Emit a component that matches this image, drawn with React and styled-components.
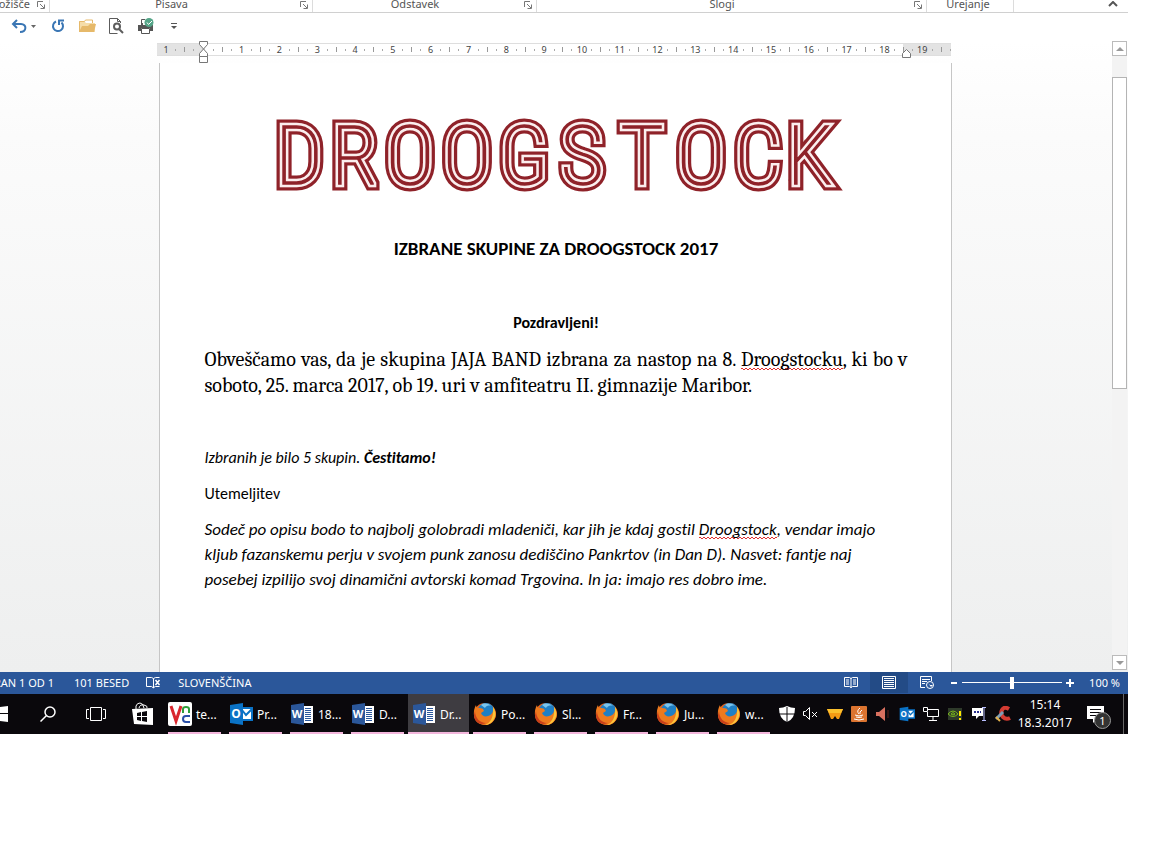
import React, { useState } from 'react';
import styled, { createGlobalStyle } from 'styled-components';

const RIBBON_GROUPS = [
  { label: 'Odložišče', clipped: true },
  { label: 'Pisava' },
  { label: 'Odstavek' },
  { label: 'Slogi' },
  { label: 'Urejanje', noLauncher: true },
];

const LOGO_LETTERS = [
  ['D', 23],
  ['R', 79],
  ['O', 134],
  ['O', 191],
  ['G', 248],
  ['S', 306],
  ['T', 366],
  ['O', 425],
  ['C', 482],
  ['K', 534],
];

const LOGO_LAYERS = [
  { color: '#8f2229', width: 13 },
  { color: '#fbeeee', width: 6.5 },
  { color: '#8f2229', width: 1.5 },
];

const APPS = [
  { icon: 'vnc', label: 'te...' },
  { icon: 'outlook', label: 'Pr...' },
  { icon: 'word', label: '18...' },
  { icon: 'word', label: 'D...' },
  { icon: 'word', label: 'Dr...', active: true },
  { icon: 'firefox', label: 'Po...' },
  { icon: 'firefox', label: 'Sl...' },
  { icon: 'firefox', label: 'Fr...' },
  { icon: 'firefox', label: 'Ju...' },
  { icon: 'firefox', label: 'w...' },
];

const RULER_MARKS = Array.from({ length: 21 }, (_, i) => i - 1);

const Launcher = () => (
  <svg width="8" height="8" viewBox="0 0 8 8" fill="none" stroke="#777">
    <path d="M.5 6V.5H6M3 3l4 4M7.5 3.5v4h-4" />
  </svg>
);

const Logo = () => (
  <LogoSvg viewBox="0 0 560 74" role="img" aria-label="Droogstock">
    {LOGO_LAYERS.map(({ color, width }, i) => (
      <g
        key={i}
        fill={color}
        stroke={color}
        strokeWidth={width}
        strokeLinejoin="miter"
      >
        {LOGO_LETTERS.map(([letter, x], n) => (
          <text key={n} x={x} y="66" textAnchor="middle">
            {letter}
          </text>
        ))}
      </g>
    ))}
  </LogoSvg>
);

const FirefoxIcon = () => (
  <svg width="24" height="24" viewBox="0 0 24 24">
    <circle cx="12" cy="12" r="11" fill="#e8641b" />
    <circle cx="13" cy="9.500" r="8.500" fill="#1f7fc4" />
    <path d="M8 3c3-2 7-2 10 1-3-1-5 0-6 2z" fill="#7cc5ec" />
    <path
      d="M3 3c0 2 1 3 2 3 2 0 4 0 5 1l1 2-3 2c1 3 4 4 7 3 4-1 6-5 5-9 3 4 4 9 1 13-4 6-12 6-17 2C0 16 0 8 3 3z"
      fill="#ee7a1e"
    />
    <path d="M20 5c3 4 3 9 1 12-2 4-6 6-9 6 5-2 9-7 8-18z" fill="#fbc53a" />
    <path d="M2 9c0 7 5 12 11 12-6 3-12-1-12-8z" fill="#c9401a" />
  </svg>
);

const WordIcon = () => (
  <svg width="24" height="24" viewBox="0 0 24 24">
    <path d="M12 4h11v17H12z" fill="#fff" />
    <path d="M15 6.500h6M15 8.500h6M15 10.500h6M15 12.500h6M15 14.500h6M15 16.500h6M15 18.500h6" stroke="#2b579a" />
    <path d="M1 3l13-2v22L1 21z" fill="#2b579a" />
    <IconText x="7" y="16" fontSize="11">
      W
    </IconText>
  </svg>
);

const OutlookIcon = ({ size = 24 }) => (
  <svg width={size} height={size} viewBox="0 0 24 24">
    <path d="M13 6h10v12H13z" fill="#fff" stroke="#0a72c6" strokeWidth="2" />
    <path d="M13 8l4 5 6-6" fill="none" stroke="#0a72c6" strokeWidth="2" />
    <path d="M1 3l13-2v22L1 21z" fill="#0a72c6" />
    <IconText x="7" y="16" fontSize="12">
      O
    </IconText>
  </svg>
);

const VncIcon = () => (
  <svg width="24" height="24" viewBox="0 0 24 24">
    <rect width="24" height="24" rx="2" fill="#fff" />
    <path d="M3 4l5 15 5-15" fill="none" stroke="#d9272e" strokeWidth="3" />
    <path d="M15 11V7q0-2 3-2t3 2v4" fill="none" stroke="#2f9e3b" strokeWidth="2" />
    <path d="M22 14h-4q-3 0-3 3t3 3h4" fill="none" stroke="#2b4fa8" strokeWidth="2" />
  </svg>
);

const APP_ICONS = {
  vnc: VncIcon,
  outlook: OutlookIcon,
  word: WordIcon,
  firefox: FirefoxIcon,
};

const QuickAccess = () => (
  <Toolbar>
    <ToolButton aria-label="Razveljavi" $width={19}>
      <svg width="16" height="14" viewBox="0 0 16 14" fill="none" stroke="#3a76b4" strokeWidth="2">
        <path d="M2 5h8c6 0 6 8-1 8M6 1L2 5l4 4" />
      </svg>
    </ToolButton>
    <ToolButton aria-label="Možnosti razveljavitve" $width={11}>
      <svg width="5" height="3" viewBox="0 0 5 3">
        <path d="M0 0h5L2.500 3z" fill="#666" />
      </svg>
    </ToolButton>
    <ToolButton aria-label="Ponovi" $width={37}>
      <svg width="14" height="14" viewBox="0 0 14 14" fill="none" stroke="#3a76b4" strokeWidth="2">
        <path d="M5 2.500a5 5 0 1 0 5.500 1" />
        <path d="M8 6V1.500h5" />
      </svg>
    </ToolButton>
    <ToolButton aria-label="Odpri" $width={23}>
      <svg width="17" height="14" viewBox="0 0 17 14">
        <path d="M0 13V2h5l2 2h9v9z" fill="#f5dca8" />
        <path d="M0 13l3-6h6l2-2h6l-2 8z" fill="#e6b96a" />
        <path d="M.5 13V2.500h5l1-1.500h7v3" fill="none" stroke="#e6b96a" />
      </svg>
    </ToolButton>
    <ToolButton aria-label="Predogled tiskanja" $width={35}>
      <svg width="15" height="16" viewBox="0 0 15 16" fill="none" stroke="#5c5c5c">
        <path d="M11.500 5V3.500l-3-3h-8v15h8M8.500.5v3h3" />
        <circle cx="8" cy="8.500" r="3" strokeWidth="2" />
        <path d="M10 11l4 4" strokeWidth="2" />
      </svg>
    </ToolButton>
    <ToolButton aria-label="Hitro tiskanje" $width={23}>
      <svg width="17" height="16" viewBox="0 0 17 16">
        <path d="M1 7h3V5h2v2h10v6h-3v-3H4v3H1z" fill="#555" />
        <path d="M4.500 6V1.500H8M4.500 10.500h8v5h-8z" fill="#fff" stroke="#555" />
        <circle cx="12" cy="4.500" r="4.500" fill="#55a588" />
        <path d="M10 4.500l1.500 2L15 3" fill="none" stroke="#fff" />
      </svg>
    </ToolButton>
    <ToolButton aria-label="Prilagodi orodno vrstico" $width={33}>
      <svg width="6" height="6" viewBox="0 0 6 6">
        <path d="M0 .5h6" stroke="#555" />
        <path d="M0 3h6L3 6z" fill="#555" />
      </svg>
    </ToolButton>
  </Toolbar>
);

const Ruler = () => (
  <RulerBar>
    {RULER_MARKS.map((n) => (
      <Centimetre key={n}>
        <RulerNumber>{n === 0 ? '' : Math.abs(n)}</RulerNumber>
        <HalfMark />
      </Centimetre>
    ))}
    <LeftIndent width="10" height="22" viewBox="0 0 10 22">
      <path
        d="M.5.5h8v3l-4 4.500 4 4.500v3h-8v-3l4-4.500-4-4.500zM.5 15.500h8v6h-8z"
        fill="#fff"
        stroke="#777"
      />
    </LeftIndent>
    <RightIndent width="9" height="9" viewBox="0 0 9 9">
      <path d="M.5 8.500v-4l4-4 4 4v4z" fill="#fff" stroke="#777" />
    </RightIndent>
  </RulerBar>
);

const Tray = () => (
  <TrayList>
    <svg width="16" height="16" viewBox="0 0 16 16">
      <path d="M8 0q4 2 8 2 0 11-8 14Q0 13 0 2q4 0 8-2z" fill="#fff" />
      <path d="M8 1v15M0 8h16" stroke="#0a080c" />
    </svg>
    <svg width="16" height="16" viewBox="0 0 16 16" fill="none" stroke="#fff">
      <path d="M.5 5.500h2l4-4v12l-4-4h-2zM9 6l5 5M14 6l-5 5" />
    </svg>
    <svg width="16" height="16" viewBox="0 0 16 16">
      <path d="M0 3h16l-4 10h-2l-2-3-2 3H4z" fill="#f59a13" />
      <path d="M0 3h16l-2 4H2z" fill="#fbc02d" />
    </svg>
    <svg width="16" height="16" viewBox="0 0 16 16">
      <rect width="16" height="16" rx="1" fill="#dc7430" />
      <path
        d="M9 2q-4 3-1 6M11 4q-3 2-2 4M4 9q4 2 8 0M5 11q3 1 6 0M3 13q5 2 10 0"
        fill="none"
        stroke="#fff"
      />
    </svg>
    <svg width="16" height="16" viewBox="0 0 16 16">
      <path d="M1 6h3l6-5v14l-6-5H1z" fill="#d9705f" />
      <path d="M13 4v8" stroke="#5a1d17" />
    </svg>
    <OutlookIcon size={16} />
    <svg width="16" height="16" viewBox="0 0 16 16" fill="none" stroke="#fff">
      <path d="M5 3.500h10.500v7H4.500V6M.5 1.500h4v4h-4zM10 11v3M6 14.500h8" />
    </svg>
    <svg width="16" height="16" viewBox="0 0 16 16">
      <path d="M1 2h14v12H1z" fill="#2e3a2a" />
      <path d="M1 8q5-6 10 0-5 5-10 0zM4 8q2-3 4 0-2 2-4 0z" fill="none" stroke="#79b51c" />
      <path d="M13 5v5M13 12v2" stroke="#ffe600" strokeWidth="2" />
    </svg>
    <svg width="16" height="16" viewBox="0 0 16 16">
      <path d="M1 2h11v8H8l-3 3v-3H1z" fill="#fff" />
      <path d="M3 6h2M6 6h2M9 6h1" stroke="#2a2f8f" strokeWidth="2" />
      <path d="M11 1.500h4M13 1v13M11 14.500h4" stroke="#b9bfff" />
    </svg>
    <svg width="16" height="16" viewBox="0 0 16 16" fill="none">
      <path d="M14 3Q9 0 7 4T8 11t7 1" stroke="#d43b32" strokeWidth="4" />
      <path d="M1 13l7-7" stroke="#7f9db5" strokeWidth="3" />
      <path d="M1 11l4 4" stroke="#e4b04a" strokeWidth="2" />
    </svg>
  </TrayList>
);

const App = () => {
  const [zoom, setZoom] = useState(50);

  const onZoomHandler = (event) => {
    setZoom(Number(event.target.value));
  };

  return (
    <Screen>
      <GlobalStyle />
      <Ribbon>
        {RIBBON_GROUPS.map(({ label, clipped, noLauncher }) => (
          <RibbonGroup key={label}>
            <GroupLabel $clipped={clipped}>{label}</GroupLabel>
            {!noLauncher && (
              <LauncherButton aria-label={`${label} – več`}>
                <Launcher />
              </LauncherButton>
            )}
          </RibbonGroup>
        ))}
        <RibbonEnd>
          <LauncherButton aria-label="Strni trak">
            <svg width="10" height="6" viewBox="0 0 10 6" fill="none" stroke="#555" strokeWidth="2">
              <path d="M1 5l4-4 4 4" />
            </svg>
          </LauncherButton>
        </RibbonEnd>
      </Ribbon>

      <QuickAccess />

      <Workspace>
        <Canvas>
          <Ruler />
          <Paper>
            <Logo />
            <Title>IZBRANE SKUPINE ZA DROOGSTOCK 2017</Title>
            <Greeting>Pozdravljeni!</Greeting>
            <Intro>
              Obveščamo vas, da je skupina JAJA BAND izbrana za nastop na 8.{' '}
              <Misspelled>Droogstocku</Misspelled>, ki bo v soboto, 25. marca
              2017, ob 19. uri v amfiteatru II. gimnazije Maribor.
            </Intro>
            <Note $italic>
              Izbranih je bilo 5 skupin. <b>Čestitamo!</b>
            </Note>
            <Note $gap={16}>Utemeljitev</Note>
            <Reason>
              Sodeč po opisu bodo to najbolj golobradi mladeniči, kar jih je
              kdaj gostil <Misspelled>Droogstock</Misspelled>, vendar imajo
              kljub fazanskemu perju v svojem punk zanosu dediščino Pankrtov
              (in Dan D). Nasvet: fantje naj posebej izpilijo svoj dinamični
              avtorski komad Trgovina. In ja: imajo res dobro ime.
            </Reason>
          </Paper>
        </Canvas>
        <ScrollBar>
          <ScrollButton aria-label="Navzgor">
            <svg width="8" height="4" viewBox="0 0 8 4">
              <path d="M0 4l4-4 4 4z" fill="#999" />
            </svg>
          </ScrollButton>
          <ScrollTrack>
            <ScrollThumb />
          </ScrollTrack>
          <ScrollButton aria-label="Navzdol">
            <svg width="8" height="4" viewBox="0 0 8 4">
              <path d="M0 0h8L4 4z" fill="#999" />
            </svg>
          </ScrollButton>
        </ScrollBar>
      </Workspace>

      <StatusBar>
        <PageCount>STRAN 1 OD 1</PageCount>
        <StatusText>101 BESED</StatusText>
        <svg width="15" height="13" viewBox="0 0 15 13" fill="none" stroke="#fff">
          <path d="M7.500 2.500l-2-1h-5v9h5l2 1.500V2.500l2-1h4M7.500 11.500l2-1h4" />
          <path d="M9.500 4l4 5M13.500 4l-4 5" strokeWidth="1.500" />
        </svg>
        <StatusText>SLOVENŠČINA</StatusText>
        <StatusViews>
          <ViewButton aria-label="Bralni način">
            <svg width="14" height="13" viewBox="0 0 14 13" fill="none" stroke="#fff">
              <path d="M.5 1.500h5l1.500 1 1.500-1h5v9h-5l-1.500 1-1.500-1h-5zM7 2v10M2 4h3M2 6h3M2 8h3M9 4h3M9 6h3M9 8h3" />
            </svg>
          </ViewButton>
          <ViewButton aria-label="Postavitev tiskanja" $active>
            <svg width="14" height="13" viewBox="0 0 14 13" fill="none" stroke="#fff">
              <path d="M.5.5h13v12H.5zM2 2.500h10M2 4.500h10M2 6.500h10M2 8.500h10M2 10.500h10" />
            </svg>
          </ViewButton>
          <ViewButton aria-label="Spletna postavitev">
            <svg width="14" height="13" viewBox="0 0 14 13" fill="none" stroke="#fff">
              <path d="M5 11.500H.5V.5h11V5M2 3.500h8M2 5.500h5M2 7.500h3" />
              <circle cx="10" cy="9" r="3.500" fill="#2b579a" />
              <path d="M8 7l2 2h3l-2 2z" fill="#fff" stroke="none" />
            </svg>
          </ViewButton>
        </StatusViews>
        <ZoomButton aria-label="Pomanjšaj">
          <svg width="8" height="8" viewBox="0 0 8 8" stroke="#fff" strokeWidth="2">
            <path d="M1 4h6" />
          </svg>
        </ZoomButton>
        <ZoomSlider
          type="range"
          min="0"
          max="100"
          aria-label="Povečava"
          value={zoom}
          onChange={onZoomHandler}
        />
        <ZoomButton aria-label="Povečaj">
          <svg width="8" height="8" viewBox="0 0 8 8" stroke="#fff" strokeWidth="2">
            <path d="M0 4h8M4 0v8" />
          </svg>
        </ZoomButton>
        <ZoomValue>100 %</ZoomValue>
      </StatusBar>

      <TaskBar>
        <SystemButton aria-label="Začetek" $width={24} $start>
          <svg width="8" height="16" viewBox="0 0 8 16" fill="#fff">
            <path d="M0 1l8-1v7H0zM0 8h8v8l-8-1z" />
          </svg>
        </SystemButton>
        <SystemButton aria-label="Iskanje" $width={48}>
          <svg width="16" height="16" viewBox="0 0 16 16" fill="none" stroke="#fff">
            <circle cx="10" cy="6" r="5" strokeWidth="1.500" />
            <path d="M6.500 9.500L.5 15.500" strokeWidth="1.500" />
          </svg>
        </SystemButton>
        <SystemButton aria-label="Pogled opravil" $width={48}>
          <svg width="20" height="14" viewBox="0 0 20 14" fill="none" stroke="#fff">
            <path d="M4.500.5h11v13h-11zM3 2.500H.5v9H3M17 2.500h2.500v9H17" />
          </svg>
        </SystemButton>
        <SystemButton aria-label="Trgovina" $width={44}>
          <svg width="21" height="24" viewBox="0 0 21 24">
            <path d="M4 7V4q1-3 4-3t4 5M7 6q1-4 5-3t3 3" fill="none" stroke="#fff" />
            <path d="M0 7l21-1v17L2 22z" fill="#fff" />
            <path d="M5 11l4-1v4H5zM10 10l5-1v5h-5zM5 15h4v4l-4-1zM10 15h5v5l-5-1z" fill="#0a080c" />
          </svg>
        </SystemButton>
        {APPS.map(({ icon, label, active }) => {
          const Icon = APP_ICONS[icon];
          return (
            <AppButton key={label} $active={active}>
              <Icon />
              {label}
            </AppButton>
          );
        })}
        <Tray />
        <Clock>
          <span>15:14</span>
          <span>18.3.2017</span>
        </Clock>
        <Notifications aria-label="Obvestila">
          <svg width="17" height="17" viewBox="0 0 17 17">
            <path d="M0 0h17v13h-7l-4 4v-4H0z" fill="#fff" />
            <path d="M3 3.500h11M3 6.500h11M3 9.500h7" stroke="#0a080c" />
          </svg>
          <Badge>1</Badge>
        </Notifications>
        <ShowDesktop aria-label="Pokaži namizje" />
      </TaskBar>
    </Screen>
  );
};

export default App;

const GlobalStyle = createGlobalStyle`
  body {
    margin: 0;
    background-color: #fff;
  }

  * {
    box-sizing: border-box;
  }

  button {
    border: none;
    padding: 0;
    background: none;
    color: inherit;
    font: inherit;
  }

  svg {
    display: block;
    flex-shrink: 0;
  }
`;

const Screen = styled.div`
  margin-right: 24px;
  font-family: 'Noto Sans', 'Open Sans', sans-serif;
  font-size: 11px;
  color: #555;
`;

const Ribbon = styled.div`
  display: grid;
  grid-template-columns: 50fr 263fr 224fr 390fr 87fr 114fr;
  height: 13px;
  border-bottom: 1px solid #d0d0d0;
`;

const RibbonGroup = styled.div`
  min-width: 0;
  display: flex;
  align-items: flex-start;
  padding-right: 4px;
  border-right: 1px solid #dcdcdc;
`;

const GroupLabel = styled.span`
  flex: 1;
  min-width: 0;
  display: flex;
  justify-content: ${({ $clipped }) => ($clipped ? 'flex-end' : 'center')};
  line-height: 8px;
`;

const LauncherButton = styled.button`
  display: flex;
  padding: 1px 0 0 7px;
`;

const RibbonEnd = styled.div`
  display: flex;
  justify-content: flex-end;
  padding-right: 10px;
`;

const Toolbar = styled.div`
  display: flex;
  align-items: center;
  height: 28px;
  padding: 0 0 2px 9px;
`;

const ToolButton = styled.button`
  display: flex;
  justify-content: center;
  width: ${({ $width }) => $width}px;
`;

const Workspace = styled.main`
  display: flex;
  background: linear-gradient(#fff, #fbfbfb 15%, #eeefef);
`;

const Canvas = styled.div`
  flex: 1;
  min-width: 0;
  display: flex;
  flex-direction: column;
  align-items: center;
  padding: 2px 2px 0 0;
`;

const RulerBar = styled.div`
  position: relative;
  display: flex;
  width: 794px;
  max-width: 100%;
  height: 13px;
  margin-right: 3px;
  border-top: 1px solid #dedede;
  border-bottom: 1px solid #dedede;
  background: linear-gradient(
    to right,
    #e3e3e3 6%,
    #fff 6%,
    #fff 94%,
    #e3e3e3 94%
  );
`;

const Centimetre = styled.div`
  flex: 1;
  display: flex;
  align-items: center;
`;

const RulerNumber = styled.span`
  flex: 1 1 0;
  min-width: 0;
  display: flex;
  justify-content: center;
  font-size: 9px;
  line-height: 11px;
  color: #444;
`;

const HalfMark = styled.span`
  flex: 1 1 0;
  height: 5px;
  background: linear-gradient(#999, #999) center / 1px 5px no-repeat,
    linear-gradient(#aaa, #aaa) left / 1px 2px no-repeat,
    linear-gradient(#aaa, #aaa) right / 1px 2px no-repeat;
`;

const LeftIndent = styled.svg`
  position: absolute;
  left: 42px;
  top: -3px;
`;

const RightIndent = styled.svg`
  position: absolute;
  right: 40px;
  top: 5px;
`;

const Paper = styled.article`
  width: 793px;
  max-width: 100%;
  margin-top: 7px;
  padding: 55px 43px 80px 45px;
  background-color: #fff;
  border: solid #c6c6c6;
  border-width: 0 1px;
  color: #000;
  font-family: Carlito, Lato, sans-serif;
  font-variant-ligatures: none;
`;

const LogoSvg = styled.svg`
  width: 560px;
  max-width: 100%;
  margin: 0 auto;
  overflow: visible;
  font-family: 'Roboto Condensed', Roboto, sans-serif;
  font-size: 82px;
  font-weight: 100;
`;

const IconText = styled.text`
  fill: #fff;
  font-family: 'Open Sans', sans-serif;
  font-weight: 700;
  text-anchor: middle;
`;

const Title = styled.h1`
  margin: 45px 0 0;
  font-size: 19px;
  font-weight: 700;
  line-height: 24px;
  text-align: center;
`;

const Greeting = styled.p`
  margin: 52px 0 0;
  font-size: 16px;
  font-weight: 700;
  line-height: 20px;
  text-align: center;
`;

const Intro = styled.p`
  margin: 14px 0 0;
  font-family: Caladea, 'Liberation Serif', serif;
  font-size: 20px;
  line-height: 26px;
  text-align: justify;
`;

const Note = styled.p`
  margin: ${({ $gap = 49 }) => $gap}px 0 0;
  font-size: 16px;
  font-style: ${({ $italic }) => ($italic ? 'italic' : 'normal')};
  line-height: 20px;
`;

const Reason = styled.p`
  margin: 13px 0 0;
  font-size: 17px;
  font-style: italic;
  line-height: 25px;
`;

const Misspelled = styled.span`
  background: repeating-linear-gradient(
        to right,
        #e03030 0 2px,
        transparent 2px 4px
      )
      0 calc(100% - 2px) / 100% 1px no-repeat,
    repeating-linear-gradient(to right, transparent 0 2px, #e03030 2px 4px) 0
      calc(100% - 1px) / 100% 1px no-repeat;
`;

const ScrollBar = styled.div`
  display: flex;
  flex-direction: column;
  width: 15px;
  margin: 0 1px 2px 0;
  background-color: #f3f3f3;
`;

const ScrollButton = styled.button`
  display: flex;
  align-items: center;
  justify-content: center;
  height: 15px;
  border: 1px solid #bbb;
  background-color: #fff;
`;

const ScrollTrack = styled.div`
  flex: 1;
  padding-top: 21px;
`;

const ScrollThumb = styled.div`
  height: 54%;
  border: 1px solid #b4b4b4;
  background-color: #fff;
`;

const StatusBar = styled.footer`
  display: flex;
  align-items: center;
  height: 22px;
  padding-bottom: 1px;
  background-color: #2b579a;
  color: #fff;
`;

const PageCount = styled.span`
  width: 54px;
  display: flex;
  justify-content: flex-end;
  white-space: nowrap;
`;

const StatusText = styled.span`
  padding: 0 17px 0 20px;
  white-space: nowrap;

  svg + & {
    padding-left: 17px;
  }
`;

const StatusViews = styled.div`
  display: flex;
  align-self: stretch;
  margin-left: auto;
`;

const ViewButton = styled.button`
  display: flex;
  align-items: center;
  justify-content: center;
  width: 38px;
  background-color: ${({ $active }) => ($active ? '#234b86' : 'transparent')};
`;

const ZoomButton = styled.button`
  display: flex;
  justify-content: center;
  width: 16px;
`;

const ZoomSlider = styled.input`
  appearance: none;
  width: 100px;
  height: 12px;
  margin: 0;
  background: linear-gradient(#fff, #fff) center / 100% 1px no-repeat;

  &::-webkit-slider-thumb {
    appearance: none;
    width: 4px;
    height: 12px;
    background-color: #fff;
  }
`;

const ZoomValue = styled.span`
  width: 50px;
  padding-right: 8px;
  text-align: right;
`;

const TaskBar = styled.nav`
  display: flex;
  align-items: center;
  height: 40px;
  background-color: #0a080c;
  color: #fff;
  font-size: 12px;
`;

const SystemButton = styled.button`
  display: flex;
  justify-content: ${({ $start }) => ($start ? 'flex-start' : 'center')};
  width: ${({ $width }) => $width}px;
`;

const AppButton = styled.button`
  align-self: stretch;
  display: flex;
  align-items: center;
  gap: 4px;
  width: 61px;
  padding-left: 4px;
  white-space: nowrap;
  background: linear-gradient(#f3b6dc, #f3b6dc) bottom /
    ${({ $active }) => ($active ? '100%' : '53px')} 2px no-repeat;
  background-color: ${({ $active }) => ($active ? '#3e3c41' : 'transparent')};
`;

const TrayList = styled.div`
  display: flex;
  gap: 8px;
  margin-left: auto;
`;

const Clock = styled.time`
  display: flex;
  flex-direction: column;
  align-items: center;
  width: 68px;
  line-height: 18px;
`;

const Notifications = styled.button`
  position: relative;
  display: flex;
  margin: 0 19px 0 8px;
`;

const Badge = styled.span`
  position: absolute;
  left: 7px;
  top: 6px;
  width: 17px;
  height: 17px;
  border: 1px solid #999;
  border-radius: 50%;
  background-color: #333;
  font-size: 11px;
  line-height: 15px;
  text-align: center;
`;

const ShowDesktop = styled.button`
  align-self: stretch;
  width: 5px;
  border-left: 1px solid #666;
`;
